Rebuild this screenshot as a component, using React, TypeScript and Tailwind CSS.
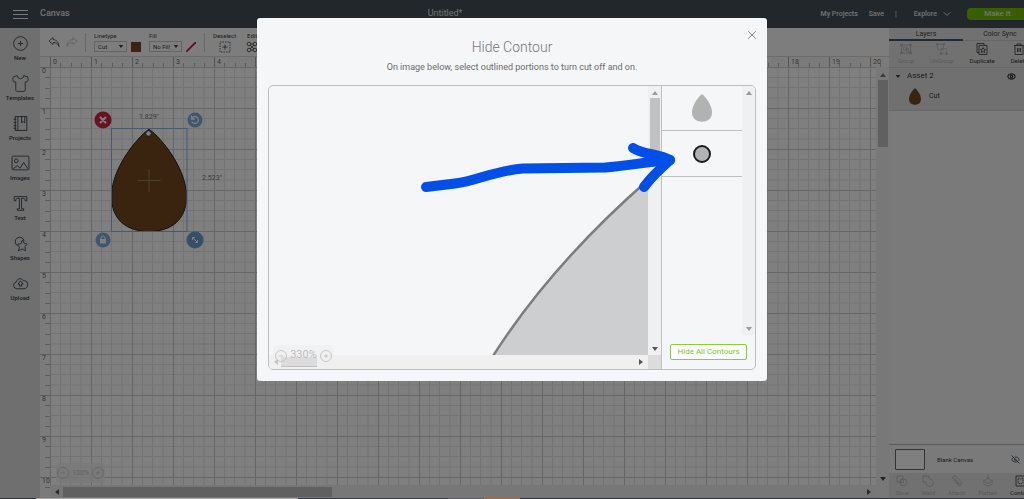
import type { ReactNode } from "react";
import { clsx } from "clsx";
import { ChevronDown, Eye, EyeOff, Shirt, X } from "lucide-react";

const DROP_PATH =
	"M37.5 1C43 3 75 36 75 68C75 91 60 103 37.5 103C15 103 0 91 0 68C0 36 32 3 37.5 1Z";

const taskbar = [
	"w-9 bg-[#2b3238]",
	"w-[262px] bg-[#a3a3a3]",
	"w-[150px] bg-[#2e3a48]",
	"w-9 bg-[#595960]",
	"w-9 bg-[#b5672a]",
	"flex-1 bg-[#303438]",
];

function Drop({ className }: { className: string }) {
	return (
		<svg viewBox="0 0 75 104" preserveAspectRatio="none" className={className}>
			<path d={DROP_PATH} fill="currentColor" />
		</svg>
	);
}

function Caret({ className }: { className?: string }) {
	return (
		<svg viewBox="0 0 6 4" className={clsx("h-1 w-1.5", className)}>
			<path d="M0 0h6L3 4z" fill="currentColor" />
		</svg>
	);
}

function ToolIcon({ children, className }: { children: ReactNode; className?: string }) {
	return (
		<svg
			viewBox="0 0 12 12"
			className={clsx("size-3", className)}
			fill="none"
			stroke="currentColor"
			strokeWidth="0.8"
			strokeLinejoin="round"
		>
			{children}
		</svg>
	);
}

function Header() {
	return (
		<header className="flex h-[28px] shrink-0 items-center justify-between bg-[#454f56] text-[#e4e4e4]">
			<div className="flex items-center gap-3 pl-[13px]">
				<button type="button" aria-label="Menu" className="flex w-[15px] flex-col gap-[3px]">
					<span className="h-px bg-[#f0f0f0]" />
					<span className="h-px bg-[#f0f0f0]" />
					<span className="h-px bg-[#f0f0f0]" />
				</button>
				<span className="text-[9px] font-medium">Canvas</span>
			</div>
			<h1 className="text-[9px]">Untitled*</h1>
			<nav className="flex items-center text-[7px] font-medium">
				<a href="#projects">My Projects</a>
				<a href="#save" className="ml-[11px]">
					Save
				</a>
				<span className="mx-[11px]">|</span>
				<button type="button" className="ml-1.5 flex items-center gap-1">
					Explore
					<ChevronDown className="size-3" />
				</button>
				<button
					type="button"
					className="ml-[14px] h-3 w-[57px] rounded-l-sm bg-[#70bd00] pl-1 text-[8px] leading-3"
				>
					Make It
				</button>
			</nav>
		</header>
	);
}

const sidebarItems: { label: string; icon: ReactNode }[] = [
	{
		label: "New",
		icon: (
			<>
				<circle cx="9" cy="9" r="6.500" />
				<path d="M9 6.500v5M6.500 9h5" />
			</>
		),
	},
	{ label: "Templates", icon: <Shirt width="18" height="18" strokeWidth="1" /> },
	{
		label: "Projects",
		icon: (
			<>
				<rect x="4" y="2.500" width="11" height="13" />
				<path d="M6.500 2.500v13M10 2.500v6l1.500-1.500 1.500 1.500v-6M2.500 5H5M2.500 8H5M2.500 11H5M2.500 13.500H5" />
			</>
		),
	},
	{
		label: "Images",
		icon: (
			<>
				<rect x="1" y="2" width="16" height="13" rx="1" />
				<circle cx="5" cy="6.500" r="1.800" />
				<path d="M2 14l4-3 2.500 2.500L12 8l4 6" />
			</>
		),
	},
	{
		label: "Text",
		icon: <path d="M3 2.500h12V6.500h-1.500C13.500 4.500 13 4 10 4v10h2v1.500H6V14h2V4C5 4 4.500 4.500 4.500 6.500H3z" />,
	},
	{
		label: "Shapes",
		icon: (
			<>
				<path d="M6 11a4.300 4.300 0 1 1 6.500-4.500" />
				<path d="M11 5.500l1.300 3 3 1.200-2 2.200.4 4-3.200-1.700-3.500 1.800 1-3.500L6 10l3.500-1z" />
			</>
		),
	},
	{
		label: "Upload",
		icon: (
			<>
				<path d="M5.500 14A3.300 3.300 0 0 1 5 7.500C5.500 4.500 9.500 3 12 6.500C14.500 6 16 8 15.800 10C15.800 12.500 14 14 12.500 14z" />
				<path d="M9 6.500L6.500 9.500H8v2h2v-2h1.500z" />
			</>
		),
	},
];

function Sidebar() {
	return (
		<nav className="w-10 shrink-0 bg-[#dedede] pt-[6px] text-[#343b42]">
			{sidebarItems.map((item) => (
				<button
					key={item.label}
					type="button"
					className="flex h-10 w-full flex-col items-center gap-px text-[6px] leading-2 font-medium"
				>
					<svg
						viewBox="0 0 18 18"
						className="size-[19px]"
						fill="none"
						stroke="currentColor"
						strokeWidth="0.8"
					>
						{item.icon}
					</svg>
					{item.label}
				</button>
			))}
		</nav>
	);
}

function ToolbarSelect({ label, value }: { label: string; value: string }) {
	return (
		<label className="flex w-[33px] flex-col gap-px text-[6px] leading-2">
			{label}
			<span className="relative block">
				<select className="block h-[11px] w-full appearance-none border border-[#c8c8c8] pl-[3px] text-[6px] leading-2">
					<option>{value}</option>
				</select>
				<Caret className="absolute top-1 right-[3px] h-[3px] w-1" />
			</span>
		</label>
	);
}

const UNDO_PATH = "M5 1.500L1 5l4 3.500V6.500C8 6.500 10 7.500 11 10.500C11 6.500 8.500 3.800 5 3.500Z";

function Toolbar() {
	return (
		<div className="flex h-[28px] shrink-0 items-center bg-[#fbfbfb] pl-2 text-[#3c3c3c]">
			<button type="button" aria-label="Undo">
				<ToolIcon>
					<path d={UNDO_PATH} />
				</ToolIcon>
			</button>
			<button type="button" aria-label="Redo" className="ml-[6px] text-[#bdbdbd]">
				<ToolIcon className="-scale-x-100">
					<path d={UNDO_PATH} />
				</ToolIcon>
			</button>
			<span className="ml-[7px] h-[19px] w-px bg-[#cfcfcf]" />
			<div className="ml-2 flex items-end gap-1">
				<ToolbarSelect label="Linetype" value="Cut" />
				<span className="size-[10px] bg-[#74491f]" />
			</div>
			<div className="ml-2 flex items-end gap-1">
				<ToolbarSelect label="Fill" value="No Fill" />
				<svg viewBox="0 0 10 10" className="size-[10px] bg-white">
					<path d="M0 10L10 0" stroke="#d8103c" strokeWidth="1.800" />
				</svg>
			</div>
			<span className="ml-2 h-[19px] w-px bg-[#cfcfcf]" />
			<button type="button" className="ml-2 flex flex-col items-center gap-px text-[6px] leading-2">
				Deselect
				<ToolIcon>
					<rect x="1" y="1" width="10" height="10" strokeDasharray="1.500 1" />
					<path d="M6 3.500v5M3.500 6h5" />
				</ToolIcon>
			</button>
			<button type="button" className="ml-2.5 flex flex-col items-center gap-px text-[6px] leading-2">
				Edit
				<ToolIcon>
					<circle cx="3" cy="3" r="1.800" />
					<circle cx="9" cy="3" r="1.800" />
					<circle cx="3" cy="9" r="1.800" />
					<circle cx="9" cy="9" r="1.800" />
					<path d="M4 4l4 4M8 4L4 8M5 3h2M5 9h2" />
				</ToolIcon>
			</button>
		</div>
	);
}

const ticks = [0, 1, 2, 3];

function HorizontalRuler() {
	return (
		<div className="flex h-[11px] shrink-0 overflow-hidden border-t border-[#d8d8d8] bg-[#f7f7f7] pl-[10px] text-[7px] leading-[11px] text-[#6b6b6b]">
			{Array.from({ length: 21 }, (_, n) => (
				<div key={n} className="relative flex w-[41px] shrink-0 items-end border-l border-[#aaa]">
					<span className="absolute top-0 left-0.5">{n}</span>
					{ticks.map((t) => (
						<span key={t} className="h-1 flex-1 border-r border-[#bbb] last:border-0" />
					))}
				</div>
			))}
		</div>
	);
}

function VerticalRuler() {
	return (
		<div className="w-[10px] shrink-0 overflow-hidden bg-[#f7f7f7] text-[7px] leading-[6px] text-[#6b6b6b]">
			{Array.from({ length: 11 }, (_, n) => (
				<div key={n} className="relative flex h-[41px] flex-col items-end border-t border-[#bbb]">
					<span className="absolute top-0 left-0.5">{n}</span>
					{ticks.map((t) => (
						<span key={t} className="w-[5px] flex-1 border-b border-[#bbb] last:border-0" />
					))}
				</div>
			))}
		</div>
	);
}

function Handle({ children }: { children: ReactNode }) {
	return (
		<g stroke="#fff" fill="none" strokeLinecap="round">
			{children}
		</g>
	);
}

function Artwork() {
	return (
		<svg
			viewBox="0 0 190 150"
			className="absolute top-[43px] left-10 h-[150px] w-[190px] [font-family:Roboto,sans-serif]"
		>
			<g transform="translate(21.500 18.500)">
				<path d={DROP_PATH} fill="#74491f" stroke="#222" strokeWidth="1" />
				<rect width="75.500" height="103" fill="none" stroke="#8bb4e0" />
				<circle cx="37" cy="5" r="2.800" fill="#fff" stroke="#333" />
				<path d="M26 52h23M37.500 40.500v23" stroke="#a78d74" strokeWidth="0.8" />
			</g>
			<text x="59" y="9" textAnchor="middle" fontSize="7" fill="#777">
				1.829"
			</text>
			<text x="122" y="70" textAnchor="middle" fontSize="7" fill="#777">
				2.523"
			</text>
			<Handle>
				<circle cx="13" cy="10" r="8.500" fill="#d32544" stroke="none" />
				<path d="M10.500 7.500l5 5M15.500 7.500l-5 5" strokeWidth="2" />
			</Handle>
			<Handle>
				<circle cx="105" cy="10" r="7.500" fill="#7fadde" stroke="none" />
				<path d="M102 12a3.500 3.500 0 1 0 0-4M101.500 6v3h3" strokeWidth="1.300" />
			</Handle>
			<Handle>
				<circle cx="13" cy="130" r="7.500" fill="#7fadde" stroke="none" />
				<rect x="10.500" y="129.500" width="5" height="3.500" fill="#fff" />
				<path d="M11 129v-1a2 2 0 0 1 4 0v1" />
			</Handle>
			<Handle>
				<circle cx="105" cy="130" r="8.500" fill="#6d9dd0" stroke="none" />
				<path d="M103 128l4 4M102.500 129.500v-2h2M107.500 130.500v2h-2" />
			</Handle>
		</svg>
	);
}

function ZoomControl({ value, className }: { value: string; className: string }) {
	return (
		<div className={clsx("absolute flex items-center justify-center", className)}>
			<button type="button" aria-label="Zoom out">
				<ToolIcon>
					<circle cx="6" cy="6" r="5.500" />
					<path d="M4 6h4" />
				</ToolIcon>
			</button>
			<span>{value}</span>
			<button type="button" aria-label="Zoom in">
				<ToolIcon>
					<circle cx="6" cy="6" r="5.500" />
					<path d="M4 6h4M6 4v4" />
				</ToolIcon>
			</button>
		</div>
	);
}

function Canvas() {
	return (
		<div className="flex min-h-0 flex-1">
			<VerticalRuler />
			<div className="flex min-w-0 flex-1 flex-col">
				<div className="relative min-h-0 flex-1 overflow-hidden bg-white">
					<svg className="block size-full">
						<defs>
							<pattern id="grid" width="41" height="41" patternUnits="userSpaceOnUse">
								<path
									d="M10.500 0v41M20.500 0v41M31 0v41M0 10.500h41M0 20.500h41M0 31h41"
									stroke="#e6e6e6"
									strokeWidth="1"
								/>
								<path d="M0.500 0v41M0 0.500h41" stroke="#cccccc" strokeWidth="1" />
							</pattern>
						</defs>
						<rect width="100%" height="100%" fill="url(#grid)" />
					</svg>
					<Artwork />
					<ZoomControl
						value="100%"
						className="bottom-0.5 left-[6px] h-5 w-[49px] gap-[3px] rounded-sm bg-[#f1f1f1]/80 text-[7px] text-[#c9c9c9]"
					/>
				</div>
				<div className="flex h-[13px] shrink-0 items-center justify-between bg-[#efefef] pr-1 pl-1 text-[#555]">
					<Caret className="rotate-90" />
					<span className="ml-[3px] h-[10px] w-[269px] bg-[#c1c1c1]" />
					<Caret className="ml-auto -rotate-90" />
				</div>
			</div>
			<div className="flex w-[13px] shrink-0 flex-col items-center bg-[#f1f1f1] pt-[6px] pb-[17px] text-[#444]">
				<Caret className="rotate-180 text-[#777]" />
				<span className="mt-[3px] h-[67px] w-[10px] bg-[#c1c1c1]" />
				<Caret className="mt-auto" />
			</div>
		</div>
	);
}

type Tool = { label: string; icon: ReactNode; enabled: boolean };

const layerTools: Tool[] = [
	{
		label: "Group",
		enabled: false,
		icon: (
			<>
				<rect x="1.500" y="2" width="9" height="8" />
				<path d="M.5 1h2v2h-2zM9.500 1h2v2h-2zM.5 9h2v2h-2zM9.500 9h2v2h-2z" />
				<rect x="3.500" y="4" width="3.500" height="3" />
				<circle cx="7.300" cy="7" r="1.700" />
			</>
		),
	},
	{
		label: "UnGroup",
		enabled: false,
		icon: (
			<>
				<path d="M1.500 1.500h6v5h-6zM5 5.500h5.500v5H5z" strokeDasharray="2 0.6" />
				<path d="M.5.500h1.500V2H.5zM7 .500h1.500V2H7zM10 10h1.500v1.500H10zM4 10h1.500v1.500H4z" />
			</>
		),
	},
	{
		label: "Duplicate",
		enabled: true,
		icon: (
			<>
				<path d="M3 9.500H1v-9h7v2" />
				<rect x="3" y="2.500" width="8" height="9" />
				<path d="M7 4.500l.8 1.800 1.800.2-1.300 1.200.4 1.900L7 8.600l-1.700 1 .4-1.900-1.300-1.200 1.800-.2z" />
			</>
		),
	},
	{
		label: "Delete",
		enabled: true,
		icon: <path d="M1 2.500h10M4 2.500V1h4v1.500M2 2.500v9h8v-9M4.500 5v4M6 5v4M7.500 5v4" />,
	},
];

const shapeTools: Tool[] = [
	{
		label: "Slice",
		enabled: false,
		icon: (
			<>
				<path d="M1 1h6v3.500M1 1v6h3" />
				<circle cx="7.500" cy="7.500" r="3.500" />
				<path d="M4.500 4.500h3v3h-3z" />
			</>
		),
	},
	{
		label: "Weld",
		enabled: false,
		icon: <path d="M1 1h6v3a3.700 3.700 0 1 1-3 3H1z" />,
	},
	{
		label: "Attach",
		enabled: false,
		icon: (
			<path d="M3 2.500l5.500 6.500a1.300 1.300 0 0 0 2-1.500L5.500 1.500A2 2 0 0 0 2 4l5.500 6.500a2 2 0 0 0 3-.5M4 4.500l4 4.500" />
		),
	},
	{
		label: "Flatten",
		enabled: false,
		icon: <path d="M6 0v4M4.500 2.500L6 4l1.500-1.500M1 6l5-2.500L11 6 6 8.500zM1 8.500L6 11l5-2.500" />,
	},
	{
		label: "Contour",
		enabled: true,
		icon: (
			<>
				<rect x="1" y="1" width="10" height="10" />
				<path d="M3 3l2.500 1L8 3v5L5.500 9 3 8z" strokeDasharray="1.500 0.800" />
			</>
		),
	},
];

function ToolRow({ tools, className }: { tools: Tool[]; className: string }) {
	return (
		<div className={clsx("flex shrink-0 items-center bg-[#e2e2e2] text-[6px] leading-2", className)}>
			{tools.map(({ label, icon, enabled }) => (
				<button
					key={label}
					type="button"
					disabled={!enabled}
					className={clsx(
						"flex shrink-0 flex-col items-center gap-0.5",
						enabled ? "text-[#333]" : "text-[#b5b5b5]",
					)}
				>
					<ToolIcon>{icon}</ToolIcon>
					{label}
				</button>
			))}
		</div>
	);
}

function LayersPanel() {
	return (
		<aside className="flex w-[135px] shrink-0 flex-col overflow-hidden bg-[#f4f4f4] text-[#333b42]">
			<div className="flex h-[13px] shrink-0 bg-[#e2e2e2] text-[7px] leading-[13px] text-[#444]">
				<button type="button" className="w-[74px] shrink-0 border-b-2 border-[#4a545c]">
					Layers
				</button>
				<button type="button" className="w-[74px] shrink-0 border-b border-[#ccc]">
					Color Sync
				</button>
			</div>
			<ToolRow tools={layerTools} className="h-[27px] gap-4 border-b border-[#cccccc] pl-[9px]" />
			<div className="h-[43px] shrink-0 border-b border-[#cfcfcf] bg-[#e0e0e0] pr-2 pl-[6px]">
				<div className="flex h-4 items-center">
					<Caret className="h-[3px] w-1" />
					<span className="ml-[6px] text-[8px]">Asset 2</span>
					<Eye className="ml-auto size-[9px]" strokeWidth={3} />
				</div>
				<div className="flex h-6 items-center gap-2 pl-[14px] text-[7px]">
					<Drop className="h-[17px] w-3 text-[#74491f]" />
					Cut
				</div>
			</div>
			<div className="mt-auto flex h-[29px] shrink-0 items-center border-t border-[#b5b5b5] pr-1 pl-[6px] text-[6px]">
				<span className="h-[21px] w-[30px] rounded-[1px] border border-[#666] bg-white" />
				<span className="ml-3">Blank Canvas</span>
				<EyeOff className="ml-auto size-[9px]" strokeWidth={2} />
			</div>
			<ToolRow tools={shapeTools} className="h-[25px] gap-[13px] pl-[7px]" />
		</aside>
	);
}

function ContourDialog() {
	return (
		<div className="fixed inset-0 flex items-start justify-center bg-black/50 pt-[18px]">
			<section
				role="dialog"
				aria-labelledby="contour-title"
				className="relative w-[510px] rounded-[3px] bg-[#f5f6f8] px-[11px] pt-5 pb-[11px] text-center"
			>
				<button type="button" aria-label="Close" className="absolute top-[10px] right-2 text-[#777]">
					<X className="size-[14px]" strokeWidth={1.5} />
				</button>
				<h2 id="contour-title" className="text-[14px] leading-[18px] font-light text-[#777]">
					Hide Contour
				</h2>
				<p className="mt-1 text-[9px] leading-[14px] text-[#6a6a6a]">
					On image below, select outlined portions to turn cut off and on.
				</p>
				<div className="mt-[11px] flex h-[285px] overflow-hidden rounded-[5px] border border-[#bfbfbf] text-[#555]">
					<div className="relative flex min-w-0 flex-1 flex-col">
						<div className="flex min-h-0 flex-1">
							<svg
								viewBox="0 0 380 269"
								preserveAspectRatio="xMaxYMax slice"
								className="min-w-0 flex-1"
							>
								<path d="M225 270Q283 179 380 94V270Z" fill="#cdced0" />
								<path d="M225 270Q283 179 380 94" fill="none" stroke="#7d7d7d" strokeWidth="2.500" />
							</svg>
							<div className="flex w-[13px] flex-col items-center bg-[#f0f0f0] pt-[5px] pb-1">
								<Caret className="rotate-180 text-[#999]" />
								<span className="mt-[3px] h-[56px] w-[10px] bg-[#c1c1c1]" />
								<Caret className="mt-auto" />
							</div>
						</div>
						<div className="flex h-[14px] items-center bg-[#f0f0f0] pl-1">
							<Caret className="rotate-90 text-[#888]" />
							<span className="ml-0.5 h-[10px] w-[36px] bg-[#c1c1c1]" />
							<Caret className="mr-1 ml-auto -rotate-90" />
							<span className="h-full w-[13px] bg-[#dcdcdc]" />
						</div>
						<ZoomControl
							value="330%"
							className="bottom-[3px] left-1 h-[21px] w-[61px] gap-[3px] rounded-sm bg-[#eee]/60 text-[11px] text-[#bcbcbc]"
						/>
					</div>
					<div className="flex w-[94px] shrink-0 flex-col border-l border-[#bfbfbf]">
						<div className="flex min-h-0 flex-1">
							<div className="flex-1">
								<button
									type="button"
									aria-label="Outer contour"
									className="flex h-[45px] w-full items-center justify-center border-b border-[#bfbfbf]"
								>
									<Drop className="h-[28px] w-5 text-[#b2b2b2]" />
								</button>
								<button
									type="button"
									aria-label="Hole contour"
									className="flex h-[46px] w-full items-center justify-center border-b border-[#bfbfbf]"
								>
									<span className="size-[18px] rounded-full border-2 border-[#1c1c1c] bg-[#b2b2b2]" />
								</button>
							</div>
							<div className="flex w-[13px] flex-col items-center justify-between bg-[#f0f0f0] pt-[5px] pb-1 text-[#999]">
								<Caret className="rotate-180" />
								<Caret />
							</div>
						</div>
						<button
							type="button"
							className="mt-[9px] mr-2 mb-[9px] ml-2 h-4 rounded-[2px] border border-[#8dcb3c] bg-white text-[8px] leading-[14px] whitespace-nowrap text-[#7fc32a]"
						>
							Hide All Contours
						</button>
					</div>
				</div>
				<svg
					viewBox="0 0 270 60"
					className="absolute top-[122px] left-[158px] h-[60px] w-[270px]"
					fill="none"
					stroke="#004fe6"
					strokeWidth="10"
					strokeLinecap="round"
					strokeLinejoin="round"
				>
					<path d="M11 47L40 43.500C62 41 78 31 108 28.500L190 27.500C212 26 230 22 255 20" />
					<path d="M218 8C226 14 244 14 255 20C246 28 234 40 229 47" />
				</svg>
			</section>
		</div>
	);
}

export default function App() {
	return (
		<div className="flex h-screen flex-col overflow-hidden [font-family:Roboto,sans-serif]">
			<Header />
			<div className="flex min-h-0 flex-1">
				<Sidebar />
				<main className="flex min-w-0 flex-1 flex-col">
					<Toolbar />
					<HorizontalRuler />
					<Canvas />
				</main>
				<LayersPanel />
			</div>
			<div className="relative z-10 flex h-px shrink-0">
				{taskbar.map((segment) => (
					<span key={segment} className={segment} />
				))}
			</div>
			<ContourDialog />
		</div>
	);
}
